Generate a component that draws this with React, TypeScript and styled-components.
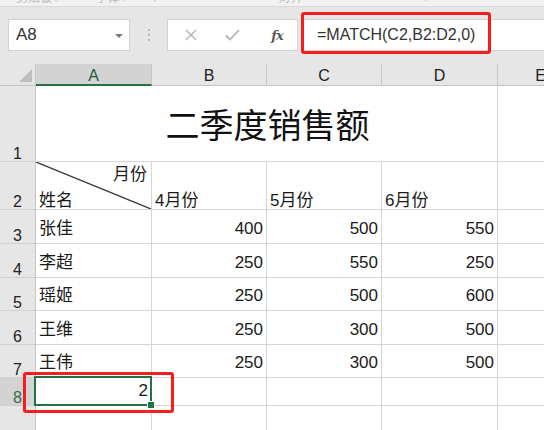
import React from "react";
import styled, { createGlobalStyle, css } from "styled-components";

const GlobalStyle = createGlobalStyle`
  html, body { margin: 0; padding: 0; }
  body {
    width: 544px;
    height: 430px;
    overflow: hidden;
    background: #ffffff;
    font-family: "Liberation Sans", "Noto Sans CJK SC", sans-serif;
  }
  * { box-sizing: border-box; }
`;

const GREEN = "#217346";
const GRID = "#d6d6d6";
const HEAD_BG = "#e6e6e6";

const Page = styled.div`
  position: relative;
  width: 544px;
  height: 430px;
  display: flex;
  flex-direction: column;
  overflow: hidden;
  background: ${HEAD_BG};
`;

const RibbonTail = styled.div`
  height: 7px;
  flex: none;
  background: #f1f1f1;
  border-bottom: 1px solid #d9d9d9;
  display: flex;
  overflow: hidden;
`;

const RibbonLabel = styled.span<{ $left: number }>`
  margin-left: ${(p) => p.$left}px;
  margin-top: -9px;
  font-family: "Noto Sans CJK SC", sans-serif;
  font-size: 12px;
  line-height: 12px;
  color: #b9b9b9;
  white-space: nowrap;
`;

const FormulaBar = styled.div`
  height: 57px;
  flex: none;
  display: flex;
  align-items: flex-start;
  padding: 12px 0 0 8px;
  background: ${HEAD_BG};
`;

const BarBox = styled.div`
  height: 32px;
  background: #ffffff;
  border: 1px solid #d2d2d2;
  display: flex;
  align-items: center;
`;

const NameBox = styled(BarBox)`
  width: 122px;
  justify-content: space-between;
  padding: 0 6px 0 7px;
  font-size: 17px;
  color: #333;
`;

const Caret = styled.span`
  width: 0;
  height: 0;
  border-left: 4px solid transparent;
  border-right: 4px solid transparent;
  border-top: 4px solid #7a7a7a;
  margin-top: 1px;
`;

const DotsSep = styled.div`
  width: 37px;
  height: 32px;
  display: flex;
  flex-direction: column;
  align-items: center;
  justify-content: center;
  gap: 3px;
`;

const Dot = styled.span`
  width: 2px;
  height: 2px;
  background: #b8b8b8;
`;

const IconBox = styled(BarBox)`
  width: 131px;
  padding: 0 0 0 16px;
`;

const IconSlot = styled.span<{ $w: number }>`
  width: ${(p) => p.$w}px;
  display: flex;
  align-items: center;
  justify-content: center;
`;

const Fx = styled.span`
  font-family: "DejaVu Serif", "Liberation Serif", serif;
  font-style: italic;
  font-weight: bold;
  font-size: 13px;
  color: #5a5a5a;
  letter-spacing: -1px;
`;

const FormulaInput = styled(BarBox)`
  flex: 1;
  margin-left: 5px;
  border-right: none;
  padding-left: 13px;
  font-size: 16px;
  color: #333;
`;

const Sheet = styled.div`
  flex: none;
  width: 584px;
  display: grid;
  grid-template-columns: 36px 116px 115px 115px 116px 86px;
  grid-template-rows: 22px 76px 48px 34px 34px 33px 34px 33px 28px 28px;
  background: #ffffff;
`;

const Corner = styled.div`
  background: ${HEAD_BG};
  border-right: 1px solid #c8c8c8;
  border-bottom: 1px solid #c4c4c4;
  display: flex;
  align-items: flex-end;
  justify-content: flex-end;
  padding: 0 3px 3px 0;
`;

const ColHead = styled.div<{ $sel?: boolean }>`
  background: ${HEAD_BG};
  border-right: 1px solid #c8c8c8;
  border-bottom: 1px solid #c4c4c4;
  display: flex;
  align-items: center;
  justify-content: center;
  font-size: 16px;
  color: #222;
  padding-top: 3px;
  ${(p) =>
    p.$sel &&
    css`
      background: #d3d3d3;
      border-bottom: 2px solid ${GREEN};
      color: #1f5c3c;
      padding-top: 4px;
    `}
`;

const RowHead = styled.div<{ $sel?: boolean }>`
  background: ${HEAD_BG};
  border-right: 1px solid #c4c4c4;
  border-bottom: 1px solid #cfcfcf;
  display: flex;
  align-items: flex-end;
  justify-content: center;
  font-size: 16px;
  line-height: 14px;
  color: #222;
  ${(p) =>
    p.$sel &&
    css`
      background: #d3d3d3;
      color: #2c6e49;
    `}
`;

const Cell = styled.div<{ $align?: "left" | "right" | "center"; $low?: boolean }>`
  position: relative;
  border-right: 1px solid ${GRID};
  border-bottom: 1px solid ${GRID};
  display: flex;
  align-items: flex-end;
  justify-content: ${(p) =>
    p.$align === "right" ? "flex-end" : p.$align === "center" ? "center" : "flex-start"};
  padding: 0 3px ${(p) => (p.$low ? "0" : "4px")} 3px;
  font-size: 17px;
  line-height: ${(p) => (p.$low ? "16px" : "20px")};
  color: #1a1a1a;
  white-space: nowrap;
`;

const TitleCell = styled(Cell)`
  grid-column: 2 / 6;
  align-items: center;
  justify-content: center;
  padding: 0 0 0 2px;
  font-family: "Noto Sans CJK SC", sans-serif;
  font-size: 34px;
  line-height: 40px;
  color: #111;
`;

const DiagCell = styled(Cell)`
  flex-direction: column;
  align-items: stretch;
  justify-content: space-between;
  padding: 5px 4px 0 3px;
`;

const DiagTop = styled.span`
  align-self: flex-end;
`;

const DiagLine = styled.svg`
  position: absolute;
  left: 0;
  top: 0;
  width: 100%;
  height: 100%;
  pointer-events: none;
`;

const Selected = styled(Cell)`
  &::after {
    content: "";
    position: absolute;
    left: -2px;
    top: -2px;
    right: -1px;
    bottom: -1px;
    border: 2px solid ${GREEN};
  }
  &::before {
    content: "";
    position: absolute;
    right: -4px;
    bottom: -4px;
    width: 6px;
    height: 6px;
    background: ${GREEN};
    border: 1px solid #fff;
    z-index: 2;
  }
`;

const Callout = styled.div<{ $x: number; $y: number; $w: number; $h: number }>`
  position: absolute;
  left: ${(p) => p.$x}px;
  top: ${(p) => p.$y}px;
  width: ${(p) => p.$w}px;
  height: ${(p) => p.$h}px;
  border: 3px solid #f41e1e;
  border-radius: 3px;
  pointer-events: none;
`;

const rows: [string, number, number, number][] = [
  ["张佳", 400, 500, 550],
  ["李超", 250, 550, 250],
  ["瑶姬", 250, 500, 600],
  ["王维", 250, 300, 500],
  ["王伟", 250, 300, 500],
];

export default function App() {
  return (
    <Page>
      <GlobalStyle />
      <RibbonTail>
        <RibbonLabel $left={16}>剪贴板 ⌐</RibbonLabel>
        <RibbonLabel $left={34}>字体 ⌐</RibbonLabel>
        <RibbonLabel $left={24}>⌐</RibbonLabel>
        <RibbonLabel $left={118}>对齐</RibbonLabel>
        <RibbonLabel $left={122}>⌐</RibbonLabel>
      </RibbonTail>
      <FormulaBar>
        <NameBox>
          <span>A8</span>
          <Caret />
        </NameBox>
        <DotsSep>
          <Dot />
          <Dot />
          <Dot />
        </DotsSep>
        <IconBox>
          <IconSlot $w={14}>
            <svg width="12" height="12" viewBox="0 0 12 12">
              <path d="M1 1 L11 11 M11 1 L1 11" stroke="#b3b3b3" strokeWidth="1.4" fill="none" />
            </svg>
          </IconSlot>
          <IconSlot $w={68}>
            <svg width="15" height="12" viewBox="0 0 15 12">
              <path d="M1 6.5 L5 10.5 L14 1" stroke="#b3b3b3" strokeWidth="1.8" fill="none" />
            </svg>
          </IconSlot>
          <IconSlot $w={22}>
            <Fx>fx</Fx>
          </IconSlot>
        </IconBox>
        <FormulaInput>=MATCH(C2,B2:D2,0)</FormulaInput>
      </FormulaBar>
      <Sheet>
        <Corner>
          <svg width="13" height="13" viewBox="0 0 13 13">
            <path d="M13 0 L13 13 L0 13 Z" fill="#bdbdbd" />
          </svg>
        </Corner>
        <ColHead $sel>A</ColHead>
        <ColHead>B</ColHead>
        <ColHead>C</ColHead>
        <ColHead>D</ColHead>
        <ColHead>E</ColHead>

        <RowHead>1</RowHead>
        <TitleCell>二季度销售额</TitleCell>
        <Cell />

        <RowHead>2</RowHead>
        <DiagCell $low>
          <DiagLine viewBox="0 0 100 100" preserveAspectRatio="none">
            <line x1="0" y1="0" x2="100" y2="100" stroke="#3a3a3a" strokeWidth="1.3" vectorEffect="non-scaling-stroke" />
          </DiagLine>
          <DiagTop>月份</DiagTop>
          <span>姓名</span>
        </DiagCell>
        <Cell $low>4月份</Cell>
        <Cell $low>5月份</Cell>
        <Cell $low>6月份</Cell>
        <Cell />

        {rows.map(([name, b, c, d], i) => (
          <React.Fragment key={name}>
            <RowHead>{i + 3}</RowHead>
            <Cell>{name}</Cell>
            <Cell $align="right">{b}</Cell>
            <Cell $align="right">{c}</Cell>
            <Cell $align="right">{d}</Cell>
            <Cell />
          </React.Fragment>
        ))}

        <RowHead $sel>8</RowHead>
        <Selected $align="right">2</Selected>
        <Cell />
        <Cell />
        <Cell />
        <Cell />

        <RowHead />
        <Cell />
        <Cell />
        <Cell />
        <Cell />
        <Cell />
      </Sheet>
      <Callout $x={301} $y={12} $w={190} $h={42} />
      <Callout $x={23} $y={372} $w={151} $h={41} />
    </Page>
  );
}
